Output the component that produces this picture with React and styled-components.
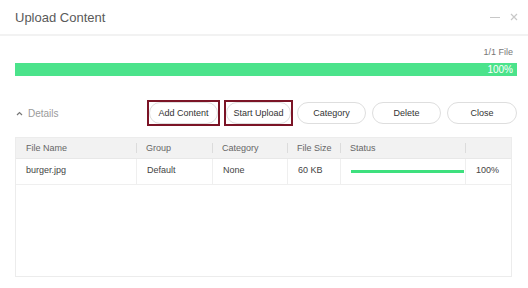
import React from 'react';
import styled, {createGlobalStyle} from 'styled-components';

const GlobalStyle = createGlobalStyle`
  html, body {
    margin: 0;
    padding: 0;
    background: #fff;
  }
  body {
    font-family: "Liberation Sans", Arial, sans-serif;
  }
`;

const Dialog = styled.div`
  width: 528px;
  height: 288px;
  background: #fff;
  display: flex;
  flex-direction: column;
`;

const Header = styled.div`
  height: 34px;
  display: flex;
  align-items: center;
  justify-content: space-between;
  padding: 0 10px 0 15px;
  border-bottom: 2px solid #f2f2f2;
`;

const Title = styled.div`
  font-size: 13px;
  color: #5a5a5a;
`;

const WindowControls = styled.div`
  display: flex;
  align-items: center;
  gap: 10px;
`;

const Body = styled.div`
  padding: 0 11px 0 15px;
  display: flex;
  flex-direction: column;
`;

const FileCount = styled.div`
  font-size: 9px;
  color: #777;
  text-align: right;
  margin-top: 11px;
  padding-right: 4px;
  height: 12px;
`;

const ProgressBar = styled.div`
  margin-top: 4px;
  height: 13px;
  background: #4be38b;
  display: flex;
  align-items: center;
  justify-content: flex-end;
  padding-right: 4px;
  color: #fff;
  font-size: 10px;
`;

const Toolbar = styled.div`
  margin-top: 24px;
  height: 26px;
  display: flex;
  align-items: center;
`;

const DetailsToggle = styled.div`
  display: flex;
  align-items: center;
  gap: 5px;
  font-size: 10px;
  color: #9a9a9a;
  padding-left: 1px;
  margin-right: auto;
`;

const Buttons = styled.div`
  display: flex;
  align-items: center;
  gap: 4px;
`;

const Highlight = styled.div`
  border: 2px solid #7b1426;
  display: flex;
  height: 22px;
`;

const PillButton = styled.button`
  width: ${p => p.$w}px;
  height: 22px;
  border: 1px solid #dedede;
  border-radius: 11px;
  background: #fff;
  font-family: "Liberation Sans", Arial, sans-serif;
  font-size: 9px;
  color: #333;
  padding: 0;
  margin-left: ${p => p.$gap || 0}px;
`;

const Table = styled.div`
  margin-top: 11px;
  height: 138px;
  margin-right: 5px;
  border: 1px solid #ececec;
  display: flex;
  flex-direction: column;
`;

const cols = '120px 76px 75px 53px 125px 1fr';

const HeadRow = styled.div`
  display: grid;
  grid-template-columns: ${cols};
  height: 20px;
  background: #f2f2f2;
  border-bottom: 1px solid #e8e8e8;
`;

const HeadCell = styled.div`
  font-size: 9px;
  color: #666;
  display: flex;
  align-items: center;
  padding-left: 10px;
  position: relative;
  &:not(:first-child)::before {
    content: '';
    position: absolute;
    left: 0;
    top: 5px;
    height: 10px;
    width: 1px;
    background: #dcdcdc;
  }
`;

const Row = styled.div`
  display: grid;
  grid-template-columns: ${cols};
  height: 25px;
  border-bottom: 1px solid #efefef;
`;

const Cell = styled.div`
  font-size: 9px;
  color: #444;
  display: flex;
  align-items: center;
  padding-left: 10px;
  padding-bottom: 3px;
  &:not(:first-child) {
    border-left: 1px solid #efefef;
  }
`;

const StatusTrack = styled.div`
  width: 113px;
  height: 3px;
  background: #3ee07e;
  margin-top: 3px;
`;

const columns = ['File Name', 'Group', 'Category', 'File Size', 'Status', ''];

const App = () => (
  <>
    <GlobalStyle />
    <Dialog>
      <Header>
        <Title>Upload Content</Title>
        <WindowControls>
          <svg width="10" height="10" viewBox="0 0 10 10">
            <path d="M0 5.5h10" stroke="#c8c8c8" strokeWidth="1" />
          </svg>
          <svg width="8" height="8" viewBox="0 0 8 8">
            <path d="M1 1l6 6M7 1L1 7" stroke="#c8c8c8" strokeWidth="1.2" />
          </svg>
        </WindowControls>
      </Header>
      <Body>
        <FileCount>1/1 File</FileCount>
        <ProgressBar>100%</ProgressBar>
        <Toolbar>
          <DetailsToggle>
            <svg width="7" height="5" viewBox="0 0 7 5">
              <path d="M1 4l2.5-2.5L6 4" fill="none" stroke="#777" strokeWidth="1.2" />
            </svg>
            Details
          </DetailsToggle>
          <Buttons>
            <Highlight>
              <PillButton $w={69}>Add Content</PillButton>
            </Highlight>
            <Highlight>
              <PillButton $w={65}>Start Upload</PillButton>
            </Highlight>
            <PillButton $w={69}>Category</PillButton>
            <PillButton $w={69} $gap={2}>Delete</PillButton>
            <PillButton $w={70} $gap={2}>Close</PillButton>
          </Buttons>
        </Toolbar>
        <Table>
          <HeadRow>
            {columns.map((c, i) => (
              <HeadCell key={i}>{c}</HeadCell>
            ))}
          </HeadRow>
          <Row>
            <Cell>burger.jpg</Cell>
            <Cell>Default</Cell>
            <Cell>None</Cell>
            <Cell>60 KB</Cell>
            <Cell><StatusTrack /></Cell>
            <Cell>100%</Cell>
          </Row>
        </Table>
      </Body>
    </Dialog>
  </>
);

export default App;
